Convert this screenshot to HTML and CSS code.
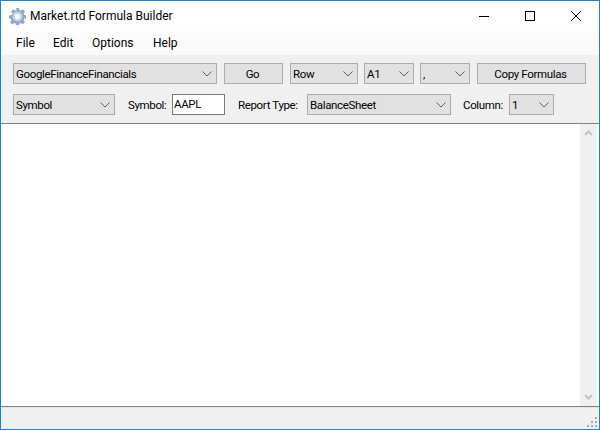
FILE: index.html
```html
<!DOCTYPE html>
<html lang="en">
<head>
<meta charset="utf-8">
<title>Market.rtd Formula Builder</title>
<link rel="stylesheet" href="styles.css">
</head>
<body>
<div class="window">
  <header class="titlebar">
    <svg class="app-icon" viewBox="0 0 16 16" width="17" height="17">
      <path fill="#8fa6c4" d="M6.600 0h2.800l.4 2.300 1.400.6L13 1.600l2 2-1.300 1.900.6 1.400 2.300.4v2.800l-2.300.4-.6 1.400 1.300 1.900-2 2-1.800-1.300-1.400.6-.4 2.300H6.600l-.4-2.300-1.400-.6L3 15.900l-2-2 1.300-1.900-.6-1.400L0 10.200V7.400l2.700-.4.6-1.400L2 3.600l2-2 1.800 1.300 1.400-.6z" transform="translate(0 -.4)"/>
      <circle cx="8" cy="8" r="4.700" fill="#c7d3e2"/>
      <circle cx="8" cy="8" r="2.700" fill="#f4f7fa"/>
    </svg>
    <span class="title">Market.rtd Formula Builder</span>
    <div class="caption">
      <button class="cap"><svg width="10" height="10" viewBox="0 0 10 10"><path d="M0 5.500h10" stroke="#000" fill="none"/></svg></button>
      <button class="cap"><svg width="10" height="10" viewBox="0 0 10 10"><rect x=".5" y=".5" width="9" height="9" stroke="#000" fill="none"/></svg></button>
      <button class="cap"><svg width="10" height="10" viewBox="0 0 10 10"><path d="M0 0l10 10M10 0L0 10" stroke="#000" fill="none"/></svg></button>
    </div>
  </header>
  <nav class="menubar">
    <span class="menu-item m-file">File</span>
    <span class="menu-item m-edit">Edit</span>
    <span class="menu-item m-options">Options</span>
    <span class="menu-item m-help">Help</span>
  </nav>
  <section class="toolbar">
    <div class="row">
      <div class="combo w-source"><span>GoogleFinanceFinancials</span><svg class="chev" width="10" height="6" viewBox="0 0 10 6"><path d="M.5.5L5 5 9.500.5" stroke="#606060" fill="none"/></svg></div>
      <button class="btn w-go">Go</button>
      <div class="combo w-row"><span>Row</span><svg class="chev" width="10" height="6" viewBox="0 0 10 6"><path d="M.5.5L5 5 9.500.5" stroke="#606060" fill="none"/></svg></div>
      <div class="combo w-a1"><span>A1</span><svg class="chev" width="10" height="6" viewBox="0 0 10 6"><path d="M.5.5L5 5 9.500.5" stroke="#606060" fill="none"/></svg></div>
      <div class="combo w-sep"><span>,</span><svg class="chev" width="10" height="6" viewBox="0 0 10 6"><path d="M.5.5L5 5 9.500.5" stroke="#606060" fill="none"/></svg></div>
      <button class="btn w-copy">Copy Formulas</button>
    </div>
    <div class="row">
      <div class="combo w-symbol"><span>Symbol</span><svg class="chev" width="10" height="6" viewBox="0 0 10 6"><path d="M.5.5L5 5 9.500.5" stroke="#606060" fill="none"/></svg></div>
      <span class="label l-symbol">Symbol:</span>
      <div class="textbox">AAPL</div>
      <span class="label l-report">Report Type:</span>
      <div class="combo w-report"><span>BalanceSheet</span><svg class="chev" width="10" height="6" viewBox="0 0 10 6"><path d="M.5.5L5 5 9.500.5" stroke="#606060" fill="none"/></svg></div>
      <span class="label l-column">Column:</span>
      <div class="combo w-column"><span>1</span><svg class="chev" width="10" height="6" viewBox="0 0 10 6"><path d="M.5.5L5 5 9.500.5" stroke="#606060" fill="none"/></svg></div>
    </div>
  </section>
  <main class="editor">
    <div class="scrollbar">
      <svg width="9" height="6" viewBox="0 0 9 6"><path d="M1 5l3.500-3.500L8 5" stroke="#c4c4c4" stroke-width="2" fill="none"/></svg>
      <svg width="9" height="6" viewBox="0 0 9 6"><path d="M1 1l3.500 3.500L8 1" stroke="#c4c4c4" stroke-width="2" fill="none"/></svg>
    </div>
  </main>
  <footer class="statusbar">
    <svg class="grip" width="11" height="11" viewBox="0 0 11 11" fill="#a8a8a8">
      <rect x="8" y="0" width="2" height="2"/>
      <rect x="4" y="4" width="2" height="2"/><rect x="8" y="4" width="2" height="2"/>
      <rect x="0" y="8" width="2" height="2"/><rect x="4" y="8" width="2" height="2"/><rect x="8" y="8" width="2" height="2"/>
    </svg>
  </footer>
</div>
</body>
</html>
```
FILE: styles.css
```css
* { box-sizing: border-box; }
html, body { margin: 0; padding: 0; }
body {
  width: 600px;
  height: 430px;
  overflow: hidden;
  background: #f0f0f0;
  font-family: Roboto, "Liberation Sans", sans-serif;
  font-size: 12px;
  color: #000;
}
.window {
  width: 600px;
  height: 430px;
  display: flex;
  flex-direction: column;
  border: 1px solid #1883d7;
}
.titlebar {
  height: 30px;
  flex: none;
  background: #fff;
  display: flex;
  align-items: center;
  padding-left: 8px;
}
.app-icon { flex: none; }
.title {
  margin-left: 4px;
  white-space: nowrap;
}
.caption { margin-left: auto; display: flex; align-self: stretch; }
.cap {
  width: 46px;
  border: 0;
  padding: 0;
  background: none;
  display: flex;
  align-items: center;
  justify-content: center;
}
.menubar {
  height: 24px;
  flex: none;
  background: linear-gradient(to bottom, #fdfdfd, #f9f9f9);
  display: flex;
  align-items: center;
}
.menu-item { flex: none; }
.m-file { margin-left: 15px; width: 37px; }
.m-edit { width: 39px; }
.m-options { width: 61px; }
.toolbar {
  height: 68px;
  flex: none;
  background: #f0f0f0;
  padding: 8px 0 0 12px;
  display: flex;
  flex-direction: column;
  gap: 10px;
  font-size: 11.5px;
  letter-spacing: -0.35px;
}
.row { display: flex; align-items: center; height: 21px; }
.combo, .btn {
  height: 21px;
  border: 1px solid #adadad;
  background: #e1e1e1;
  font: inherit;
  letter-spacing: inherit;
  color: #000;
  flex: none;
}
.combo {
  display: flex;
  align-items: center;
  justify-content: space-between;
  padding: 0 4px 0 2px;
  white-space: nowrap;
}
.btn { padding: 0 2px 0 0; text-align: center; }
.chev { flex: none; }
.w-source { width: 204px; }
.w-go { width: 59px; margin-left: 7px; }
.w-row { width: 68px; margin-left: 7px; }
.w-a1 { width: 50px; margin-left: 6px; }
.w-sep { width: 50px; margin-left: 6px; }
.w-copy { width: 109px; margin-left: 7px; }
.w-symbol { width: 102px; }
.w-report { width: 144px; margin-left: 8px; }
.w-column { width: 45px; margin-left: 8px; }
.label { white-space: nowrap; flex: none; }
.l-symbol { margin-left: 13px; width: 44px; }
.l-report { margin-left: 13px; width: 61px; }
.l-column { margin-left: 12px; width: 38px; }
.textbox {
  width: 53px;
  height: 21px;
  flex: none;
  background: #fff;
  border: 1px solid #7a7a7a;
  padding: 2px 0 0 1px;
}
.editor {
  flex: 1;
  background: #fff;
  border-top: 1px solid #828282;
  border-bottom: 1px solid #828282;
  display: flex;
  justify-content: flex-end;
  padding-right: 2px;
}
.scrollbar {
  width: 17px;
  background: #f0f0f0;
  display: flex;
  flex-direction: column;
  justify-content: space-between;
  align-items: center;
  padding: 6px 0;
}
.statusbar {
  height: 22px;
  flex: none;
  background: #f0f0f0;
  display: flex;
  justify-content: flex-end;
  align-items: flex-end;
  padding: 0 1px 1px 0;
  border-top: 1px solid #e4e4e4;
}
.grip { display: block; }
```
